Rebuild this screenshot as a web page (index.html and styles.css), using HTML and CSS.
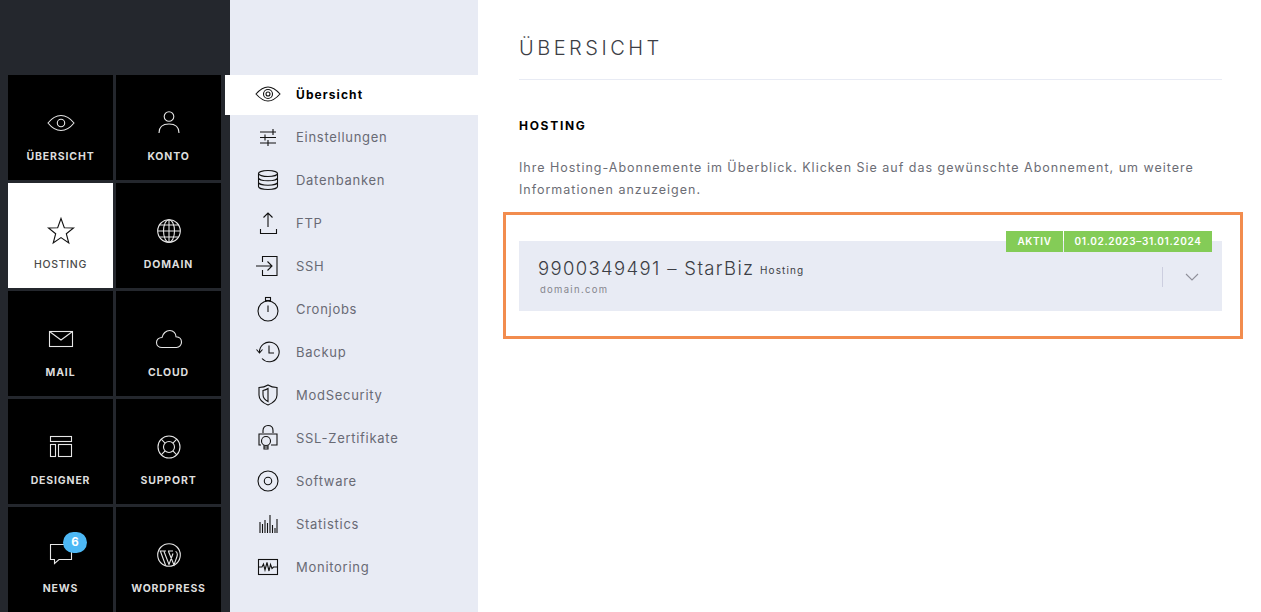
FILE: index.html
```html
<!DOCTYPE html>
<html lang="de">
<head>
<meta charset="utf-8">
<title>Übersicht</title>
<link rel="stylesheet" href="styles.css">
</head>
<body>
<div class="app">
  <aside class="rail">
    <a class="tile">
      <svg class="ticon" viewBox="0 0 32 32"><path d="M3 16C7 11 11 8.500 16 8.500S25 11 29 16C25 21 21 23.500 16 23.500S7 21 3 16Z"/><circle cx="16" cy="16" r="3.700"/></svg>
      <span class="tlabel">ÜBERSICHT</span>
    </a>
    <a class="tile">
      <svg class="ticon" viewBox="0 0 32 32"><circle cx="16" cy="9.500" r="4.800"/><path d="M6 26C6 20 10 17 16 17S26 20 26 26"/></svg>
      <span class="tlabel">KONTO</span>
    </a>
    <a class="tile tile-on">
      <svg class="ticon" viewBox="0 0 32 32"><path d="M16 3.500 19.300 12.700 28.500 12.900 21.300 18.700 23.800 28 16 22.600 8.200 28 10.700 18.700 3.500 12.900 12.700 12.700Z"/></svg>
      <span class="tlabel">HOSTING</span>
    </a>
    <a class="tile">
      <svg class="ticon" viewBox="0 0 32 32"><circle cx="16" cy="16" r="11.300"/><ellipse cx="16" cy="16" rx="5.500" ry="11.300"/><path d="M16 4.700V27.300M4.700 16H27.300M6.500 10H25.500M6.500 22H25.500"/></svg>
      <span class="tlabel">DOMAIN</span>
    </a>
    <a class="tile">
      <svg class="ticon" viewBox="0 0 32 32"><rect x="4.500" y="8.500" width="23" height="15"/><path d="M4.500 8.500 16 17 27.500 8.500"/></svg>
      <span class="tlabel">MAIL</span>
    </a>
    <a class="tile">
      <svg class="ticon" viewBox="0 0 32 32"><path d="M9 24.500C5.800 24.500 3.500 22.300 3.500 19.500S5.800 14.500 9 14.500C9.800 10.500 13 7.500 16.800 7.500 20.500 7.500 23 10.500 23 13.800 26.300 14 28.500 16.300 28.500 19.200S26.300 24.500 23.500 24.500Z"/></svg>
      <span class="tlabel">CLOUD</span>
    </a>
    <a class="tile">
      <svg class="ticon" viewBox="0 0 32 32"><rect x="5.500" y="5.500" width="21" height="5"/><rect x="5.500" y="13.500" width="5" height="12"/><rect x="13.500" y="13.500" width="13" height="12"/></svg>
      <span class="tlabel">DESIGNER</span>
    </a>
    <a class="tile">
      <svg class="ticon" viewBox="0 0 32 32"><circle cx="16" cy="16" r="11"/><circle cx="16" cy="16" r="5.500"/><path d="M8.200 8.200 12.100 12.100M23.800 8.200 19.900 12.100M8.200 23.800 12.100 19.900M23.800 23.800 19.900 19.900"/></svg>
      <span class="tlabel">SUPPORT</span>
    </a>
    <a class="tile">
      <svg class="ticon" viewBox="0 0 32 32"><path d="M5.500 5.500H26.500V20.500H14L9.500 24.500V20.500H5.500Z"/></svg>
      <span class="badge">6</span>
      <span class="tlabel">NEWS</span>
    </a>
    <a class="tile">
      <svg class="ticon" viewBox="0 0 32 32"><circle cx="16" cy="16" r="11.300"/><path d="M7.500 12.500 12.500 26M11 12.500 16 25.500 20 14.500M15.500 12.500 21 26 24 17.500C25 14.500 23.500 12.500 22.500 12.500M6.500 12H13M15 12H20"/></svg>
      <span class="tlabel">WORDPRESS</span>
    </a>
  </aside>

  <nav class="subnav">
    <a class="sub sub-on">
      <svg class="sicon" viewBox="0 0 28 28"><path d="M2 14C6 9.500 9.500 7 14 7S22 9.500 26 14C22 18.500 18.500 21 14 21S6 18.500 2 14Z"/><circle cx="14" cy="14" r="4.500"/><circle cx="14" cy="14" r="2"/></svg>
      <span>Übersicht</span>
    </a>
    <a class="sub">
      <svg class="sicon" viewBox="0 0 28 28"><path d="M6 9H22M6 14.500H22M6 20H22M19 6V12M11 11.500V17.500M14 17V23"/></svg>
      <span>Einstellungen</span>
    </a>
    <a class="sub">
      <svg class="sicon" viewBox="0 0 28 28"><ellipse cx="14" cy="7.500" rx="9.500" ry="3"/><path d="M4.500 7.500V20.500C4.500 22.200 8.800 23.500 14 23.500S23.500 22.200 23.500 20.500V7.500M4.500 11.800C4.500 13.500 8.800 14.800 14 14.800S23.500 13.500 23.500 11.800M4.500 16.200C4.500 17.900 8.800 19.200 14 19.200S23.500 17.900 23.500 16.200"/></svg>
      <span>Datenbanken</span>
    </a>
    <a class="sub">
      <svg class="sicon" viewBox="0 0 28 28"><path d="M14 4V18M9.500 8.500 14 4 18.500 8.500M6.500 20V24.500H22.500V20"/></svg>
      <span>FTP</span>
    </a>
    <a class="sub">
      <svg class="sicon" viewBox="0 0 28 28"><path d="M8.500 10V4.500H23V23.500H8.500V18M2 14H18M13.500 9.500 18 14 13.500 18.500"/></svg>
      <span>SSH</span>
    </a>
    <a class="sub">
      <svg class="sicon" viewBox="0 0 28 28"><circle cx="14" cy="16" r="10"/><rect x="11.500" y="2.500" width="5" height="3"/><path d="M14 5.500V6M14 10.500V17"/></svg>
      <span>Cronjobs</span>
    </a>
    <a class="sub">
      <svg class="sicon" viewBox="0 0 28 28"><path d="M5.500 14A9.800 9.800 0 1 1 8 20.500M2.500 11.500 5.500 15 8.500 11.500M15 7.500V15H20"/></svg>
      <span>Backup</span>
    </a>
    <a class="sub">
      <svg class="sicon" viewBox="0 0 28 28"><path d="M14 4C17 6 20 6.500 23 6.500V14C23 18.500 19 22 14 24 9 22 5 18.500 5 14V6.500C8 6.500 11 6 14 4Z"/><path d="M9 9.500C11 9 12.500 8.500 14 7.500V20.500C11 19 9 16.500 9 13.500Z"/></svg>
      <span>ModSecurity</span>
    </a>
    <a class="sub">
      <svg class="sicon" viewBox="0 0 28 28"><path d="M9 9V6.500C9 3.500 11 1.500 14 1.500S19 3.500 19 6.500V9"/><path d="M7 21H5V10H23V21H17"/><circle cx="12" cy="17" r="4.500"/><path d="M10 21V25H14V21M10 23H14"/></svg>
      <span>SSL-Zertifikate</span>
    </a>
    <a class="sub">
      <svg class="sicon" viewBox="0 0 28 28"><circle cx="14" cy="14" r="10"/><circle cx="14" cy="14" r="3.700"/></svg>
      <span>Software</span>
    </a>
    <a class="sub">
      <svg class="sicon" viewBox="0 0 28 28"><path d="M6 23V12M8.500 23V14M11 23V10M13.500 23V13M16 23V5M18.500 23V15M21 23V18M23 23V9"/></svg>
      <span>Statistics</span>
    </a>
    <a class="sub">
      <svg class="sicon" viewBox="0 0 28 28"><rect x="4.500" y="6.500" width="19" height="15"/><path d="M4.500 14H8L9.500 11 11 17 13 9.500 15 18 16.500 11.500 18 15.500 19.500 14H23.500"/></svg>
      <span>Monitoring</span>
    </a>
  </nav>

  <main class="main">
    <h1 class="title">ÜBERSICHT</h1>
    <h2 class="section">HOSTING</h2>
    <p class="intro">Ihre Hosting-Abonnemente im Überblick. Klicken Sie auf das gewünschte Abonnement, um weitere Informationen anzuzeigen.</p>
    <div class="highlight">
      <div class="card">
        <div class="tags">
          <span class="tag tag-status">AKTIV</span>
          <span class="tag">01.02.2023–31.01.2024</span>
        </div>
        <div class="card-text">
          <div class="card-title">9900349491 – StarBiz <small class="card-kind">Hosting</small></div>
          <div class="card-domain">domain.com</div>
        </div>
        <div class="card-toggle">
          <svg class="chev" viewBox="0 0 14 8"><path d="M1 1 7 7 13 1"/></svg>
        </div>
      </div>
    </div>
  </main>
</div>
</body>
</html>
```

FILE: styles.css
```css
* { box-sizing: border-box; }
html, body { margin: 0; height: 612px; overflow: hidden; background: #fff; }
body { font-family: "Inter", "Liberation Sans", sans-serif; color: #55565e; }
.app { display: flex; height: 612px; }

.rail {
  width: 230px;
  flex: none;
  background: #24272d;
  padding: 75px 0 0 8px;
  display: grid;
  grid-template-columns: 105px 105px;
  grid-auto-rows: 105px;
  gap: 3px;
  align-content: start;
}
.tile {
  position: relative;
  background: #000;
  color: #ddd;
  display: flex;
  flex-direction: column;
  align-items: center;
  padding-top: 32px;
}
.tile-on { background: #fff; color: #4a4a4a; }
.ticon { width: 32px; height: 32px; fill: none; stroke: #e6e6e6; stroke-width: 1.1; display: block; }
.tile-on .ticon { stroke: #111; }
.tlabel { margin-top: 11px; font-size: 10.500px; line-height: 14px; font-weight: 700; letter-spacing: 0.85px; }
.tile-on .tlabel { font-weight: 500; letter-spacing: 0.7px; }
.badge {
  position: absolute;
  left: 55px;
  top: 25px;
  width: 24px;
  height: 21px;
  border-radius: 11px;
  background: #4db8f5;
  color: #fff;
  font-size: 11.500px;
  font-weight: 700;
  line-height: 20px;
  text-align: center;
}

.subnav {
  width: 248px;
  flex: none;
  background: #e8ebf4;
  padding-top: 75px;
  display: flex;
  flex-direction: column;
  gap: 3px;
}
.sub {
  height: 40px;
  display: flex;
  align-items: center;
  gap: 14px;
  padding-left: 24px;
  padding-bottom: 2px;
  font-size: 13px;
  letter-spacing: 0.72px;
  color: #686a74;
}
.sub-on {
  background: #fff;
  margin-left: -5px;
  padding-left: 29px;
  color: #000;
  font-weight: 700;
  font-size: 12px;
  letter-spacing: 1.1px;
}
.sicon { width: 28px; height: 28px; flex: none; fill: none; stroke: #111; stroke-width: 1.1; display: block; }

.main { flex: 1; min-width: 0; padding: 0 39px 0 41px; }
.title {
  margin: 0;
  height: 80px;
  padding-top: 36px;
  border-bottom: 1px solid #e8ebf4;
  font-size: 20px;
  line-height: 24px;
  font-weight: 300;
  letter-spacing: 3.5px;
  color: #3c3e45;
}
.section {
  margin: 38px 0 0;
  font-size: 12px;
  line-height: 16px;
  font-weight: 700;
  letter-spacing: 1.7px;
  color: #000;
}
.intro {
  margin: 23px 0 0;
  font-size: 12.500px;
  line-height: 22px;
  letter-spacing: 0.99px;
  color: #6c6d75;
}
.highlight {
  margin: 11px -21px 0 -16px;
  height: 127px;
  border: 3px solid #f28c4e;
  padding: 26px 18px 0 13px;
}
.card {
  position: relative;
  height: 70px;
  background: #e8ebf4;
  display: flex;
  align-items: center;
  justify-content: space-between;
  padding: 0 0 0 19px;
}
.tags {
  position: absolute;
  top: -10px;
  right: 10px;
  display: flex;
  gap: 1px;
}
.tag {
  height: 21px;
  padding: 0 10.500px;
  background: #84cc57;
  color: #fff;
  font-size: 10px;
  line-height: 21px;
  font-weight: 600;
  letter-spacing: 0.65px;
}
.tag-status { padding: 0 11.500px; }
.card-title {
  font-size: 18.500px;
  line-height: 24px;
  font-weight: 300;
  letter-spacing: 1.35px;
  color: #3c3e45;
}
.card-kind { font-size: 10px; font-weight: 400; letter-spacing: 1.1px; margin-left: -1px; vertical-align: 1px; }
.card-domain { margin: 1px 0 0 2px; font-size: 9.500px; line-height: 14px; letter-spacing: 1.3px; color: #85868d; }
.card-toggle {
  width: 60px;
  height: 20px;
  border-left: 1px solid #ccceDF;
  display: flex;
  align-items: center;
  justify-content: center;
  padding-right: 2px;
  margin-top: 1px;
}
.chev { width: 14px; height: 8px; fill: none; stroke: #8f909a; stroke-width: 1.100; display: block; }
```
